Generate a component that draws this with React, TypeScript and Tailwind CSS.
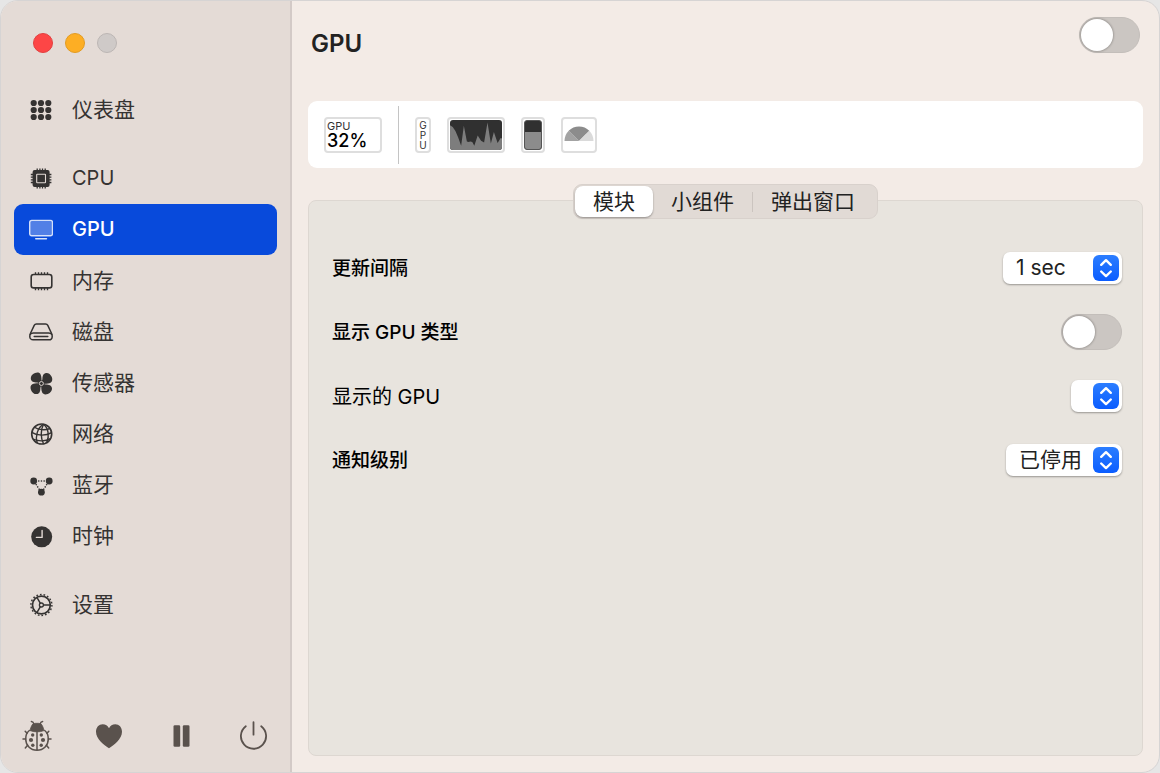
import React, { useState } from 'react';

const DashboardIcon = () => (
  <svg viewBox="0 0 24 24" className="w-6 h-6" fill="currentColor">
    {[4.7, 12, 19.3].map(x => [5, 12, 19].map(y => <circle key={`${x}-${y}`} cx={x} cy={y} r="3.1" />))}
  </svg>
);

const CpuIcon = () => (
  <svg viewBox="0 0 24 24" className="w-6 h-6" fill="none" stroke="currentColor">
    <path
      d="M8.2 1.5v20M10.9 1.5v20M13.5 1.5v20M16.2 1.5v20M1.8 7.5h20.6M1.8 10.2h20.6M1.8 12.8h20.6M1.8 15.5h20.6"
      strokeWidth="1.3"
    />
    <rect x="3.6" y="3.1" width="17" height="16.8" rx="2" fill="currentColor" stroke="none" />
    <rect x="7.7" y="7.2" width="8.8" height="8.6" rx="0.6" stroke="#e4dbd6" strokeWidth="1.1" />
  </svg>
);

const GpuIcon = () => (
  <svg viewBox="0 0 24 24" className="w-6 h-6">
    <rect x="0.7" y="2.4" width="22.8" height="15.4" rx="2" fill="currentColor" fillOpacity="0.3" stroke="currentColor" strokeOpacity="0.8" strokeWidth="1.4" />
    <path d="M6.8 20.7h10.6" stroke="currentColor" strokeOpacity="0.85" strokeWidth="1.6" strokeLinecap="round" />
  </svg>
);

const MemoryIcon = () => (
  <svg viewBox="0 0 24 24" className="w-6 h-6" fill="none" stroke="currentColor">
    <rect x="2.2" y="5.5" width="20.6" height="13.4" rx="2.4" strokeWidth="1.6" />
    <path
      d="M6.5 3.2v2.5M9.5 3.2v2.5M12.5 3.2v2.5M15.5 3.2v2.5M18.5 3.2v2.5M6.5 18.6v2.6M9.5 18.6v2.6M12.5 18.6v2.6M15.5 18.6v2.6M18.5 18.6v2.6"
      strokeWidth="1.4"
    />
  </svg>
);

const DiskIcon = () => (
  <svg viewBox="0 0 24 24" className="w-6 h-6" fill="none" stroke="currentColor" strokeWidth="1.5" strokeLinejoin="round">
    <path d="M1.3 13.8 5.2 5.4C5.7 4.4 6.4 4 7.4 4H16.6C17.6 4 18.3 4.4 18.8 5.4L22.7 13.8C23.2 14.8 23.2 15.8 23.2 16.4C23.2 18.4 21.9 19.8 19.9 19.8H4.1C2.1 19.8 .8 18.4 .8 16.4C.8 15.8 .8 14.8 1.3 13.8Z" />
    <path d="M1.3 14.2C2.1 13.2 3 12.9 4.3 12.9H19.7C21 12.9 21.9 13.2 22.7 14.2M5.2 16.5H18.8" strokeLinecap="round" />
  </svg>
);

const FanIcon = () => (
  <svg viewBox="0 0 24 24" className="w-6 h-6" fill="currentColor">
    {[0, 90, 180, 270].map(angle => (
      <path
        key={angle}
        transform={`rotate(${angle} 12.4 12.5)`}
        d="M12.4 12.5C12.7 9 12.6 5.5 11.6 3.4C10.7 1.5 8.3 1.2 6 2.1C3.2 3.2 1.6 5.4 1.8 7.8C2.1 10.6 4.9 11.5 8 11.5Z"
      />
    ))}
    <circle cx="12.4" cy="12.5" r="3" />
    <circle cx="12.4" cy="12.5" r="2" fill="none" stroke="#e4dbd6" strokeWidth="0.9" />
  </svg>
);

const NetworkIcon = () => (
  <svg viewBox="0 0 24 24" className="w-6 h-6" fill="none" stroke="currentColor" strokeWidth="1.4">
    <circle cx="12.7" cy="12" r="10" strokeWidth="1.6" />
    <path d="M14.5 2.2C8.5 6 6 14 8.2 20.9" />
    <path d="M14.5 2.2C11.5 8 11.5 16 14.5 21.8" />
    <path d="M14.5 2.2C19.5 6 20.5 14 17.8 20.4" />
    <path d="M5.5 5.2C9.5 8 16 8.5 21 6.5" />
    <path d="M2.8 10.3C8.5 14 17 14 22.6 10.6" />
    <path d="M4.1 17C9 19.6 16.5 19.6 21.5 16.6" />
  </svg>
);

const BluetoothIcon = () => (
  <svg viewBox="0 0 24 24" className="w-6 h-6" fill="currentColor">
    <circle cx="4.7" cy="8" r="3.4" />
    <circle cx="20.2" cy="8" r="3.4" />
    <circle cx="12.4" cy="19.2" r="3.4" />
    <path
      d="M9.7 8h6.5M7.2 11.6l3 4.6M17.7 11.6l-3 4.6"
      stroke="currentColor"
      strokeWidth="1.6"
      strokeLinecap="round"
      strokeDasharray="0.1 2.6"
    />
  </svg>
);

const ClockIcon = () => (
  <svg viewBox="0 0 24 24" className="w-6 h-6">
    <circle cx="12.7" cy="12.8" r="10.5" fill="currentColor" />
    <path d="M13.1 6.4v7H7.4" fill="none" stroke="#e4dbd6" strokeWidth="1.4" strokeLinecap="round" strokeLinejoin="round" />
  </svg>
);

const SettingsIcon = () => (
  <svg viewBox="0 0 24 24" className="w-6 h-6" fill="none" stroke="currentColor">
    <circle cx="12.4" cy="12" r="10.5" strokeWidth="1.4" strokeDasharray="1.7 1.965" />
    <circle cx="12.4" cy="12" r="8.9" strokeWidth="1.7" />
    <circle cx="12.4" cy="12" r="2" strokeWidth="1.3" />
    <path d="M14.4 12h7M11.4 10.3 7.9 4.4M11.4 13.7 7.9 19.6" strokeWidth="1.5" />
  </svg>
);

const BugIcon = () => (
  <svg viewBox="0 0 30 32" className="w-[30px] h-8" fill="none" stroke="currentColor" strokeWidth="1.5" strokeLinecap="round">
    <path d="M8 10.6C8.4 8.6 9.4 5.6 10.7 4.2C11.4 3.5 12.5 3.3 15 3.3S18.6 3.5 19.3 4.2C20.6 5.6 21.6 8.6 22 10.6C18 12.3 12 12.3 8 10.6Z" fill="currentColor" strokeWidth="0.8" />
    <path d="M11.8 4C11.6 2.7 10.8 1.8 9.4 1.6M18.2 4C18.4 2.7 19.2 1.8 20.6 1.6" />
    <path d="M7.3 10.5C4.5 12.6 3.7 16 3.7 19C3.7 25.3 8.4 30.3 15 30.3S26.3 25.3 26.3 19C26.3 16 25.5 12.6 22.7 10.5M15 12.5V29.5" />
    <path d="M5 13.3 3.2 11.2M25 13.3 26.8 11.2M3.7 19H1M26.3 19H29M5.4 25.5 3.3 28M24.6 25.5 26.7 28" />
    <g fill="currentColor" stroke="none">
      <circle cx="10.7" cy="15" r="1.7" />
      <circle cx="19.3" cy="15" r="1.7" />
      <circle cx="9" cy="20" r="2.1" />
      <circle cx="21" cy="20" r="2.1" />
      <circle cx="10.8" cy="25.2" r="1.7" />
      <circle cx="19.2" cy="25.2" r="1.7" />
    </g>
  </svg>
);

const HeartIcon = () => (
  <svg viewBox="0 0 28 26" className="w-7 h-[26px]" fill="currentColor">
    <path d="M14 25.2C9.5 22.4 1 16 1 8.7C1 4.3 3.9 1.2 7.7 1.2C10.6 1.2 12.7 2.7 14 5.2C15.3 2.7 17.4 1.2 20.3 1.2C24.1 1.2 27 4.3 27 8.7C27 16 18.5 22.4 14 25.2Z" />
  </svg>
);

const PauseIcon = () => (
  <svg viewBox="0 0 18 24" className="w-[18px] h-6" fill="currentColor">
    <rect x="0.5" y="1.2" width="6.7" height="21.6" rx="1.3" />
    <rect x="9.8" y="1.2" width="6.7" height="21.6" rx="1.3" />
  </svg>
);

const PowerIcon = () => (
  <svg viewBox="0 0 30 30" className="w-[30px] h-[30px]" fill="none" stroke="currentColor" strokeWidth="1.8" strokeLinecap="round">
    <path d="M6.8 5.2a12.6 12.6 0 1 0 15.4 0M14.5 1.2v12.5" />
  </svg>
);

const UpDownIcon = () => (
  <svg viewBox="0 0 26 26" className="w-[26px] h-[26px]" fill="none" stroke="white" strokeWidth="2.4" strokeLinecap="round" strokeLinejoin="round">
    <path d="M8.2 9.8 13 5.2l4.8 4.6M8.2 16.5 13 21.1l4.8-4.6" />
  </svg>
);

const groups = [
  [{ id: 'dashboard', name: '仪表盘', icon: DashboardIcon }],
  [
    { id: 'cpu', name: 'CPU', icon: CpuIcon },
    { id: 'gpu', name: 'GPU', icon: GpuIcon },
    { id: 'ram', name: '内存', icon: MemoryIcon },
    { id: 'disk', name: '磁盘', icon: DiskIcon },
    { id: 'sensors', name: '传感器', icon: FanIcon },
    { id: 'network', name: '网络', icon: NetworkIcon },
    { id: 'bluetooth', name: '蓝牙', icon: BluetoothIcon },
    { id: 'clock', name: '时钟', icon: ClockIcon },
  ],
  [{ id: 'settings', name: '设置', icon: SettingsIcon }],
];

const actions = [
  { id: 'bug', icon: BugIcon },
  { id: 'support', icon: HeartIcon },
  { id: 'pause', icon: PauseIcon },
  { id: 'quit', icon: PowerIcon },
];

const tabs = ['模块', '小组件', '弹出窗口'];

function Toggle({ id, labelledBy }: { id: string; labelledBy: string }) {
  const [on, setOn] = useState(false);
  return (
    <input
      id={id}
      type="checkbox"
      role="switch"
      aria-labelledby={labelledBy}
      checked={on}
      onChange={e => setOn(e.target.checked)}
      className="appearance-none shrink-0 w-[61px] h-9 rounded-full p-px bg-[#cbc6c2] border border-[#c3beba] checked:bg-[#0a60ff] before:block before:w-8 before:h-8 before:rounded-full before:bg-white before:shadow-[0_0_2px_1px_rgba(0,0,0,0.2)] checked:before:translate-x-[25px]"
    />
  );
}

function Select({ id, options, width }: { id: string; options: string[]; width: string }) {
  return (
    <div className={`relative ${width}`}>
      <select
        id={id}
        className="appearance-none block w-full h-8 pl-[13px] rounded-[7px] bg-white text-[21px] leading-8 text-[#222] shadow-[0_1px_2px_rgba(0,0,0,0.35)]"
      >
        {options.map(o => <option key={o}>{o}</option>)}
      </select>
      <span className="absolute right-[3px] top-[3px] rounded-md bg-linear-to-b from-[#2b7dff] to-[#0a5cff] pointer-events-none">
        <UpDownIcon />
      </span>
    </div>
  );
}

function Widget({ children, className = '' }: { children: React.ReactNode; className?: string }) {
  return <div className={`h-9 border-2 border-[#dedede] rounded-sm ${className}`}>{children}</div>;
}

// Aperçu des widgets de la barre de menus
function WidgetPreview() {
  return (
    <div className="flex items-center h-[67px] px-4 bg-white rounded-[9px]">
      <Widget className="w-[58px] pl-px">
        <div className="text-[11px] leading-[14px] text-[#333]">GPU</div>
        <div className="text-[18px] leading-4 font-medium text-black">32%</div>
      </Widget>
      <div className="w-px h-[58px] mx-4 bg-[#c4c4c4]" />
      <Widget className="w-4 pt-px flex flex-col items-center text-[10px] leading-[10px] text-[#333]">
        <span>G</span>
        <span>P</span>
        <span>U</span>
      </Widget>
      <Widget className="ml-4 w-[58px] p-px">
        <svg viewBox="0 0 154 87" preserveAspectRatio="none" className="w-full h-full rounded-[3px] bg-[#303030]">
          <path
            d="M0 87V15L8 20 16 32 24 50 33 75 41 17 50 62 55 64 60 62 66 64 72 75 82 45 92 60 101 65 111 7 121 68 130 35 141 67 150 52 154 54V87Z"
            fill="#7d7d7d"
          />
        </svg>
      </Widget>
      <Widget className="ml-4 w-6 p-px">
        <div className="flex flex-col justify-end h-full rounded-[3px] border border-[#555] bg-[#303030] overflow-hidden">
          <div className="bg-[#8c8c8c]" style={{ height: '58%' }} />
        </div>
      </Widget>
      <Widget className="ml-4 w-9 p-px">
        <svg viewBox="0 0 30 30" className="w-full h-full">
          <path d="M15 21H.5A14.5 14.5 0 0 1 4.7 10.8Z" fill="#a3a3a3" />
          <path d="M15 21 4.7 10.8A14.5 14.5 0 0 1 25.3 10.8Z" fill="#8c8c8c" />
          <path d="M15 21 25.3 10.8A14.5 14.5 0 0 1 29.5 21Z" fill="#dadada" />
        </svg>
      </Widget>
    </div>
  );
}

export default function App() {
  const [active, setActive] = useState('gpu');
  const [tab, setTab] = useState(tabs[0]);

  return (
    <div className="min-h-screen bg-[#e6e6e6] flex font-[Inter,'Noto_Sans_CJK_SC',sans-serif]">
      <div className="flex-1 flex border border-[#d6d4d4] rounded-[18px] overflow-hidden bg-[#f3ebe6]">
        <aside className="w-[291px] shrink-0 flex flex-col bg-[#e4dbd6] border-r-2 border-[#d3cac7]">
          <div className="flex gap-3 pt-8 pl-8">
            <button aria-label="关闭" className="w-5 h-5 rounded-full bg-[#fd4646] border border-[#e24040]" />
            <button aria-label="最小化" className="w-5 h-5 rounded-full bg-[#fdae24] border border-[#e29b22]" />
            <button aria-label="缩放" className="w-5 h-5 rounded-full bg-[#cfcac8] border border-[#bcb6b4]" />
          </div>

          <nav className="mt-[31px] px-[13px] flex flex-col gap-[18px]">
            {groups.map(group => (
              <div key={group[0].id} className="flex flex-col">
                {group.map(item => (
                  <button
                    key={item.id}
                    onClick={() => setActive(item.id)}
                    className={`flex items-center gap-[19px] h-[51px] pl-[15px] rounded-[9px] ${active === item.id ? 'bg-[#084adb] text-white font-medium' : 'text-[#353332]'}`}
                  >
                    <item.icon />
                    <span className={/^[A-Z]/.test(item.name) ? 'text-[20px] leading-8 pb-0.5' : 'text-[21px]'}>{item.name}</span>
                  </button>
                ))}
              </div>
            ))}
          </nav>

          <div className="mt-auto h-[72px] grid grid-cols-4 text-[#5a524d]">
            {actions.map(a => (
              <button key={a.id} aria-label={a.id} className="flex items-center justify-center">
                <a.icon />
              </button>
            ))}
          </div>
        </aside>

        <main className="flex-1 flex flex-col px-4 pb-4">
          <header className="flex justify-between h-[100px] pt-4 px-[3px]">
            <h1 id="module-title" className="pt-2 text-[24px] leading-[38px] font-semibold text-[#222]">GPU</h1>
            <Toggle id="module-enabled" labelledBy="module-title" />
          </header>

          <WidgetPreview />

          <div role="tablist" className="relative z-10 self-center mt-4 -mb-[19px] flex items-center h-[35px] p-px pr-1 rounded-[9px] bg-[#e1dad5] border border-[#d8d1cc]">
            {tabs.map((t, i) => (
              <React.Fragment key={t}>
                {i === 2 && <span className="w-px h-5 bg-[#cbc4bf]" />}
                <button
                  role="tab"
                  aria-selected={tab === t}
                  onClick={() => setTab(t)}
                  className={`h-full px-[18px] rounded-lg text-[21px] leading-[30px] text-[#222] ${tab === t ? 'bg-white shadow-[0_1px_2px_rgba(0,0,0,0.35)]' : ''}`}
                >
                  {t}
                </button>
              </React.Fragment>
            ))}
          </div>

          <section className="flex-1 pt-[35px] pl-[23px] pr-5 rounded-lg bg-[#e8e4de] border border-[#ddd7d1] text-black">
            <div className="flex items-center justify-between h-16">
              <label htmlFor="interval" className="pt-0.5 text-[19px] font-medium">更新间隔</label>
              <Select id="interval" options={['1 sec', '2 sec', '3 sec', '5 sec']} width="w-[119px]" />
            </div>
            <div className="flex items-center justify-between h-16">
              <label id="gpu-type-label" htmlFor="gpu-type" className="pt-0.5 text-[19px] font-medium">显示 GPU 类型</label>
              <Toggle id="gpu-type" labelledBy="gpu-type-label" />
            </div>
            <div className="flex items-center justify-between h-16">
              <label htmlFor="gpu-selected" className="pt-0.5 text-[20px]">显示的 GPU</label>
              <Select id="gpu-selected" options={['']} width="w-[51px]" />
            </div>
            <div className="flex items-center justify-between h-16">
              <label htmlFor="notify-level" className="pt-0.5 text-[19px] font-medium">通知级别</label>
              <Select id="notify-level" options={['已停用', '10%', '50%', '90%']} width="w-[116px]" />
            </div>
          </section>
        </main>
      </div>
    </div>
  );
}
